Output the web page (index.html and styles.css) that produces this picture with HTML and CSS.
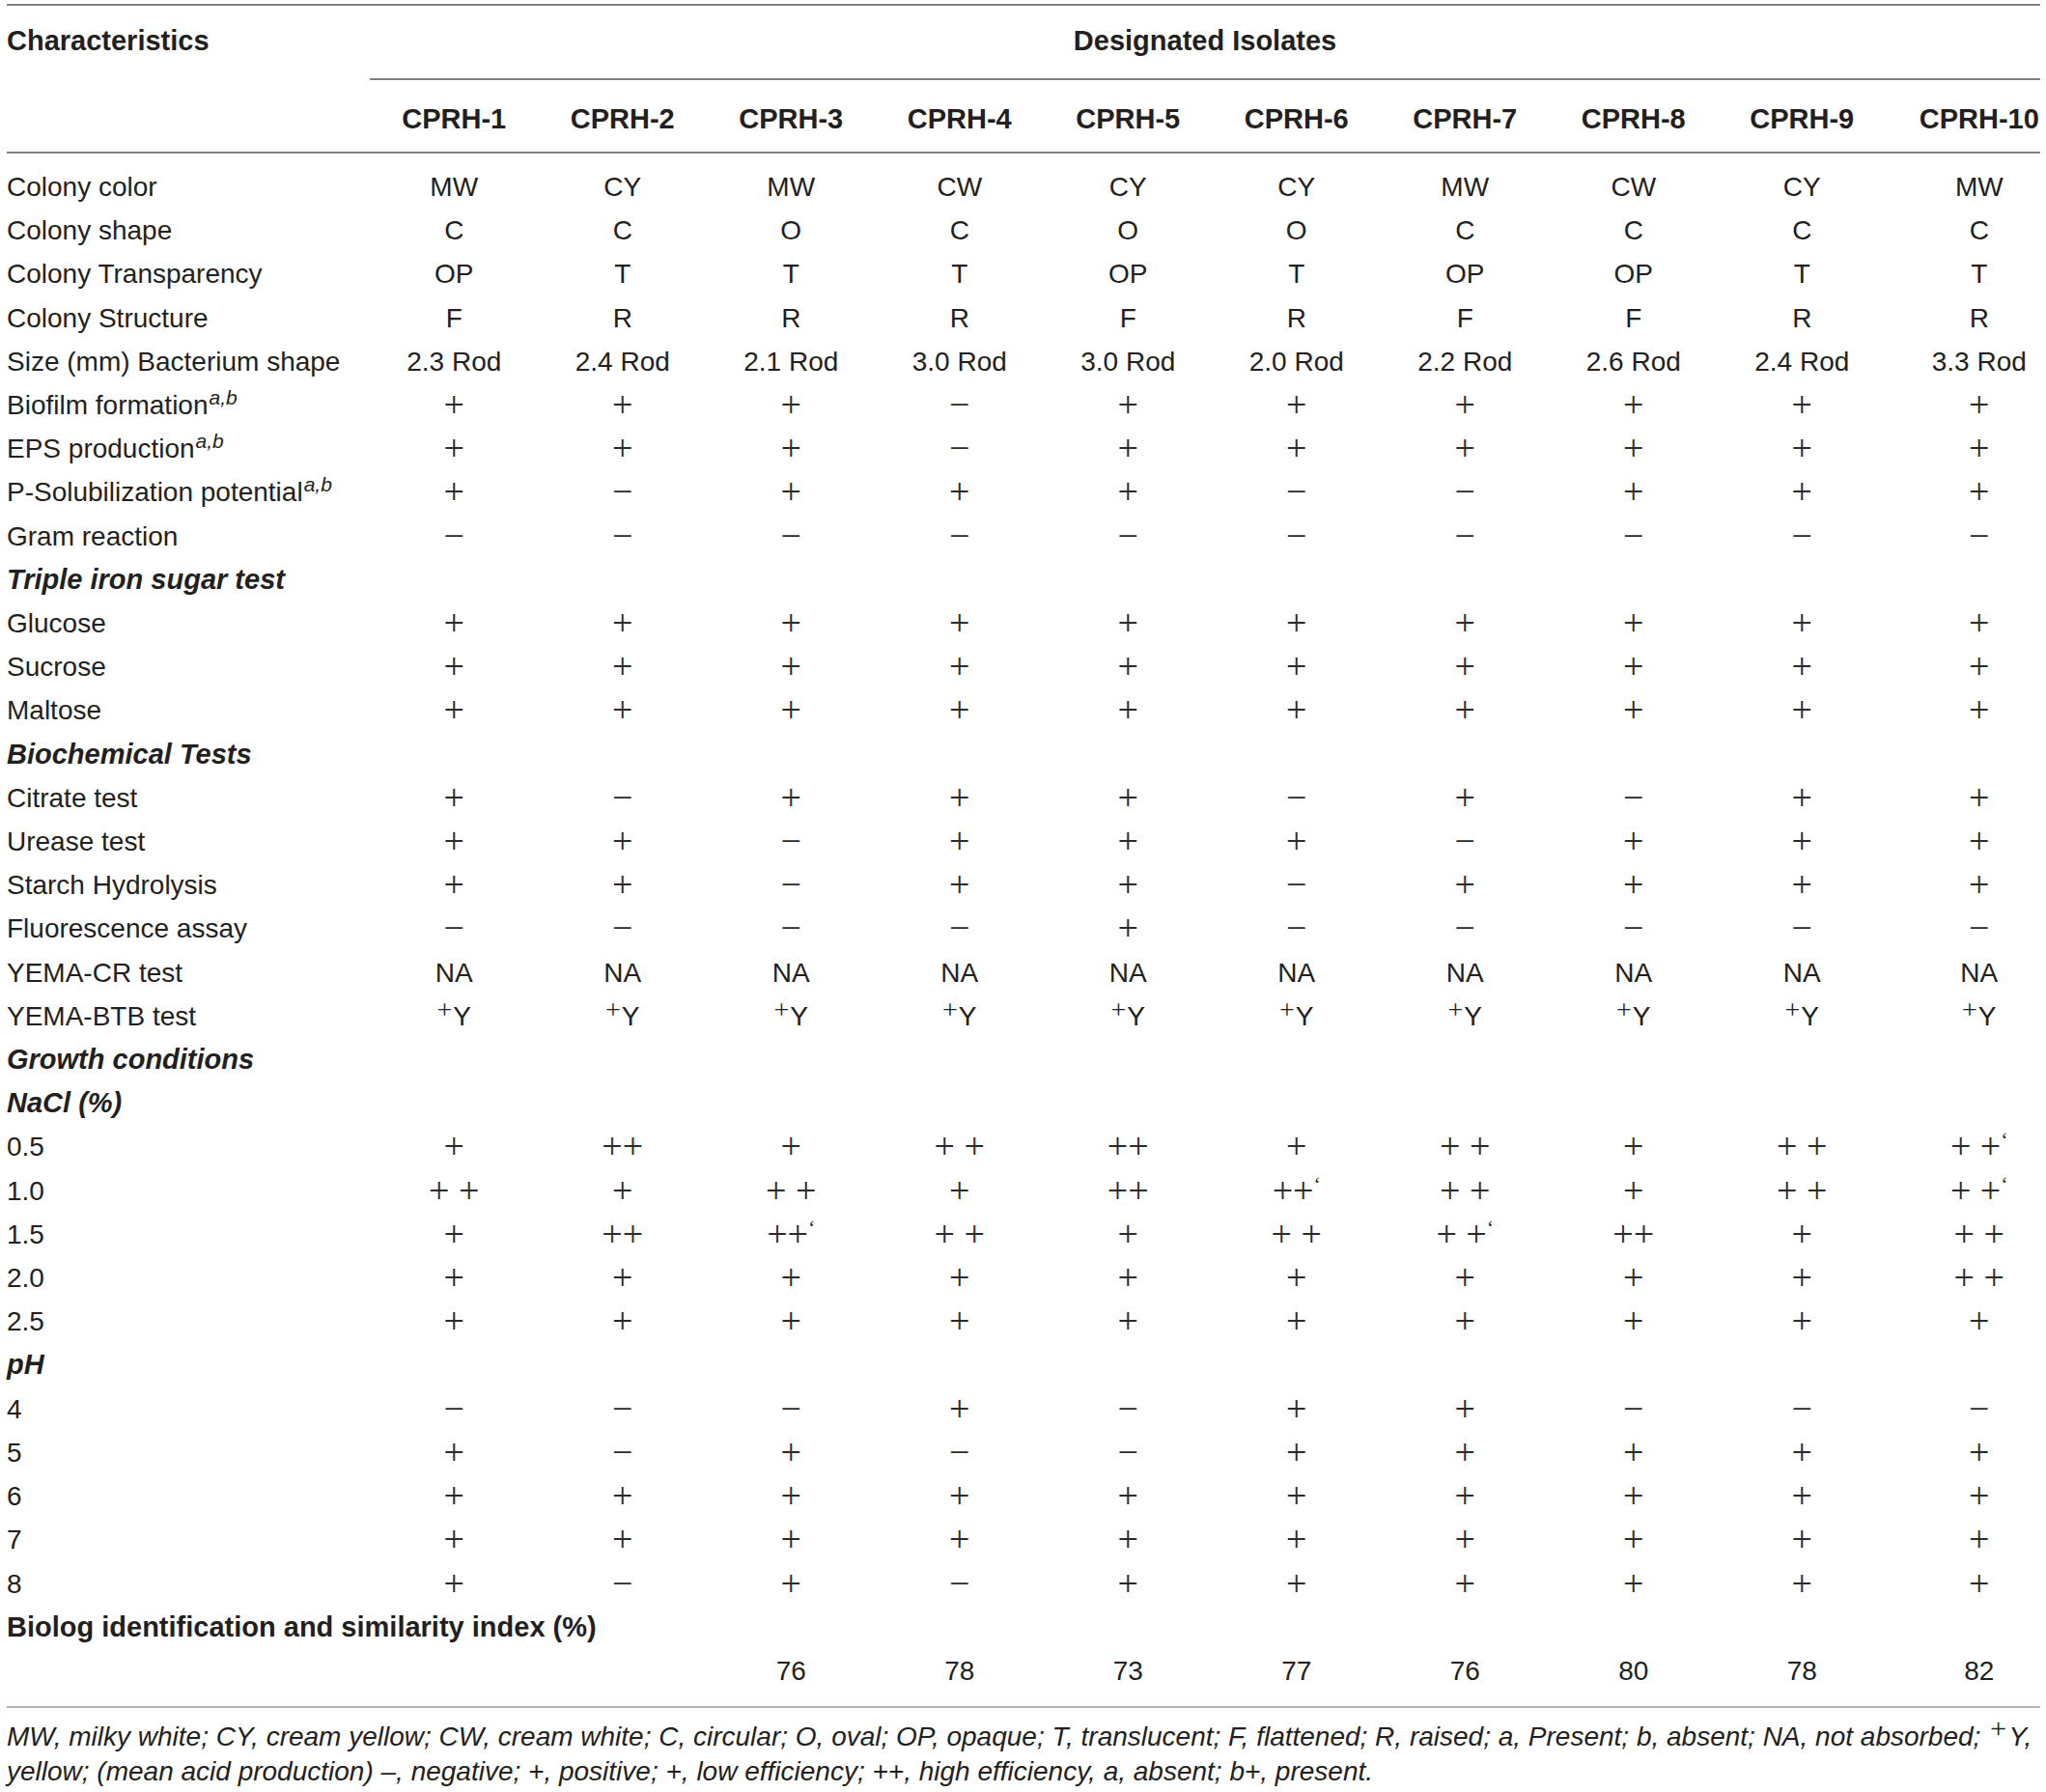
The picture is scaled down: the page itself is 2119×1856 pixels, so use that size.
FILE: index.html
```html
<!DOCTYPE html>
<html lang="en">
<head>
    <meta charset="UTF-8">
    <title>Characteristics of designated isolates</title>
    <link rel="stylesheet" href="styles.css">
</head>
<body>
<div class="page">
    <table class="traits">
        <colgroup>
            <col class="c-name">
            <col class="c-iso"><col class="c-iso"><col class="c-iso"><col class="c-iso"><col class="c-iso">
            <col class="c-iso"><col class="c-iso"><col class="c-iso"><col class="c-iso">
            <col class="c-last">
        </colgroup>
        <thead>
            <tr class="head-top">
                <th class="name">Characteristics</th>
                <th class="span" colspan="10">Designated Isolates</th>
            </tr>
            <tr class="head-iso">
                <th></th>
                <th>CPRH-1</th><th>CPRH-2</th><th>CPRH-3</th><th>CPRH-4</th><th>CPRH-5</th>
                <th>CPRH-6</th><th>CPRH-7</th><th>CPRH-8</th><th>CPRH-9</th><th>CPRH-10</th>
            </tr>
        </thead>
        <tbody>
            <tr class="first">
                <td>Colony color</td>
                <td>MW</td><td>CY</td><td>MW</td><td>CW</td><td>CY</td><td>CY</td><td>MW</td><td>CW</td><td>CY</td><td>MW</td>
            </tr>
            <tr>
                <td>Colony shape</td>
                <td>C</td><td>C</td><td>O</td><td>C</td><td>O</td><td>O</td><td>C</td><td>C</td><td>C</td><td>C</td>
            </tr>
            <tr>
                <td>Colony Transparency</td>
                <td>OP</td><td>T</td><td>T</td><td>T</td><td>OP</td><td>T</td><td>OP</td><td>OP</td><td>T</td><td>T</td>
            </tr>
            <tr>
                <td>Colony Structure</td>
                <td>F</td><td>R</td><td>R</td><td>R</td><td>F</td><td>R</td><td>F</td><td>F</td><td>R</td><td>R</td>
            </tr>
            <tr>
                <td>Size (mm) Bacterium shape</td>
                <td>2.3 Rod</td><td>2.4 Rod</td><td>2.1 Rod</td><td>3.0 Rod</td><td>3.0 Rod</td>
                <td>2.0 Rod</td><td>2.2 Rod</td><td>2.6 Rod</td><td>2.4 Rod</td><td>3.3 Rod</td>
            </tr>
            <tr class="signs">
                <td>Biofilm formation<sup class="ab">a,b</sup></td>
                <td>+</td><td>+</td><td>+</td><td>−</td><td>+</td><td>+</td><td>+</td><td>+</td><td>+</td><td>+</td>
            </tr>
            <tr class="signs">
                <td>EPS production<sup class="ab">a,b</sup></td>
                <td>+</td><td>+</td><td>+</td><td>−</td><td>+</td><td>+</td><td>+</td><td>+</td><td>+</td><td>+</td>
            </tr>
            <tr class="signs">
                <td>P-Solubilization potential<sup class="ab">a,b</sup></td>
                <td>+</td><td>−</td><td>+</td><td>+</td><td>+</td><td>−</td><td>−</td><td>+</td><td>+</td><td>+</td>
            </tr>
            <tr class="signs">
                <td>Gram reaction</td>
                <td>−</td><td>−</td><td>−</td><td>−</td><td>−</td><td>−</td><td>−</td><td>−</td><td>−</td><td>−</td>
            </tr>
            <tr class="section">
                <td colspan="11">Triple iron sugar test</td>
            </tr>
            <tr class="signs">
                <td>Glucose</td>
                <td>+</td><td>+</td><td>+</td><td>+</td><td>+</td><td>+</td><td>+</td><td>+</td><td>+</td><td>+</td>
            </tr>
            <tr class="signs">
                <td>Sucrose</td>
                <td>+</td><td>+</td><td>+</td><td>+</td><td>+</td><td>+</td><td>+</td><td>+</td><td>+</td><td>+</td>
            </tr>
            <tr class="signs">
                <td>Maltose</td>
                <td>+</td><td>+</td><td>+</td><td>+</td><td>+</td><td>+</td><td>+</td><td>+</td><td>+</td><td>+</td>
            </tr>
            <tr class="section">
                <td colspan="11">Biochemical Tests</td>
            </tr>
            <tr class="signs">
                <td>Citrate test</td>
                <td>+</td><td>−</td><td>+</td><td>+</td><td>+</td><td>−</td><td>+</td><td>−</td><td>+</td><td>+</td>
            </tr>
            <tr class="signs">
                <td>Urease test</td>
                <td>+</td><td>+</td><td>−</td><td>+</td><td>+</td><td>+</td><td>−</td><td>+</td><td>+</td><td>+</td>
            </tr>
            <tr class="signs">
                <td>Starch Hydrolysis</td>
                <td>+</td><td>+</td><td>−</td><td>+</td><td>+</td><td>−</td><td>+</td><td>+</td><td>+</td><td>+</td>
            </tr>
            <tr class="signs">
                <td>Fluorescence assay</td>
                <td>−</td><td>−</td><td>−</td><td>−</td><td>+</td><td>−</td><td>−</td><td>−</td><td>−</td><td>−</td>
            </tr>
            <tr>
                <td>YEMA-CR test</td>
                <td>NA</td><td>NA</td><td>NA</td><td>NA</td><td>NA</td><td>NA</td><td>NA</td><td>NA</td><td>NA</td><td>NA</td>
            </tr>
            <tr>
                <td>YEMA-BTB test</td>
                <td><sup class="py">+</sup>Y</td><td><sup class="py">+</sup>Y</td><td><sup class="py">+</sup>Y</td>
                <td><sup class="py">+</sup>Y</td><td><sup class="py">+</sup>Y</td><td><sup class="py">+</sup>Y</td>
                <td><sup class="py">+</sup>Y</td><td><sup class="py">+</sup>Y</td><td><sup class="py">+</sup>Y</td>
                <td><sup class="py">+</sup>Y</td>
            </tr>
            <tr class="section">
                <td colspan="11">Growth conditions</td>
            </tr>
            <tr class="section">
                <td colspan="11">NaCl (%)</td>
            </tr>
            <tr class="signs">
                <td>0.5</td>
                <td>+</td><td>++</td><td>+</td><td>+ +</td><td>++</td><td>+</td><td>+ +</td><td>+</td><td>+ +</td>
                <td>+ +<sup class="q">‘</sup></td>
            </tr>
            <tr class="signs">
                <td>1.0</td>
                <td>+ +</td><td>+</td><td>+ +</td><td>+</td><td>++</td><td>++<sup class="q">‘</sup></td><td>+ +</td><td>+</td><td>+ +</td>
                <td>+ +<sup class="q">‘</sup></td>
            </tr>
            <tr class="signs">
                <td>1.5</td>
                <td>+</td><td>++</td><td>++<sup class="q">‘</sup></td><td>+ +</td><td>+</td><td>+ +</td>
                <td>+ +<sup class="q">‘</sup></td><td>++</td><td>+</td><td>+ +</td>
            </tr>
            <tr class="signs">
                <td>2.0</td>
                <td>+</td><td>+</td><td>+</td><td>+</td><td>+</td><td>+</td><td>+</td><td>+</td><td>+</td><td>+ +</td>
            </tr>
            <tr class="signs">
                <td>2.5</td>
                <td>+</td><td>+</td><td>+</td><td>+</td><td>+</td><td>+</td><td>+</td><td>+</td><td>+</td><td>+</td>
            </tr>
            <tr class="section">
                <td colspan="11">pH</td>
            </tr>
            <tr class="signs">
                <td>4</td>
                <td>−</td><td>−</td><td>−</td><td>+</td><td>−</td><td>+</td><td>+</td><td>−</td><td>−</td><td>−</td>
            </tr>
            <tr class="signs">
                <td>5</td>
                <td>+</td><td>−</td><td>+</td><td>−</td><td>−</td><td>+</td><td>+</td><td>+</td><td>+</td><td>+</td>
            </tr>
            <tr class="signs">
                <td>6</td>
                <td>+</td><td>+</td><td>+</td><td>+</td><td>+</td><td>+</td><td>+</td><td>+</td><td>+</td><td>+</td>
            </tr>
            <tr class="signs">
                <td>7</td>
                <td>+</td><td>+</td><td>+</td><td>+</td><td>+</td><td>+</td><td>+</td><td>+</td><td>+</td><td>+</td>
            </tr>
            <tr class="signs">
                <td>8</td>
                <td>+</td><td>−</td><td>+</td><td>−</td><td>+</td><td>+</td><td>+</td><td>+</td><td>+</td><td>+</td>
            </tr>
            <tr class="section plain">
                <td colspan="11">Biolog identification and similarity index (%)</td>
            </tr>
            <tr class="last">
                <td></td>
                <td></td><td></td><td>76</td><td>78</td><td>73</td><td>77</td><td>76</td><td>80</td><td>78</td><td>82</td>
            </tr>
        </tbody>
    </table>

    <p class="note">MW, milky white; CY, cream yellow; CW, cream white; C, circular; O, oval; OP, opaque; T, translucent; F, flattened; R, raised; a, Present; b, absent; NA, not absorbed; <sup class="py">+</sup>Y,<br>yellow; (mean acid production) –, negative; +, positive; +, low efficiency; ++, high efficiency, a, absent; b+, present.</p>
</div>
</body>
</html>
```

FILE: styles.css
```css
:root {
    --ink: #231f20;
    --rule: #808080;
    --rule-light: #b4b4b4;
}

body {
    margin: 0;
    background: #fff;
    color: var(--ink);
    font-family: "Liberation Sans", Arial, sans-serif;
}

.page {
    padding: 4px 6px 0 7px;
}

.traits {
    width: 2106px;
    table-layout: fixed;
    border-collapse: separate;
    border-spacing: 0;
    border-top: 2px solid var(--rule);
    border-bottom: 2px solid var(--rule-light);
}

.c-name { width: 376px; }
.c-iso { width: 174.5px; }
.c-last { width: 159.5px; }

.traits th {
    padding: 0;
    font-size: 29px;
    font-weight: bold;
    line-height: 36px;
    vertical-align: top;
    text-align: center;
    white-space: nowrap;
}

.head-top th {
    padding: 18px 0 21px;
}

.head-top .name {
    text-align: left;
}

.head-top .span {
    border-bottom: 2px solid var(--rule);
}

.head-iso th {
    padding: 22px 0 16px;
    border-bottom: 2px solid var(--rule);
}

.traits th:nth-child(11),
.traits td:nth-child(11) {
    padding-left: 33px;
}

.traits td {
    padding: 0;
    height: 45.2px;
    font-size: 28px;
    line-height: 45.2px;
    text-align: center;
    vertical-align: middle;
    white-space: nowrap;
}

.traits td:first-child {
    text-align: left;
}

.first td {
    padding-top: 12px;
}

.last td {
    padding-bottom: 14px;
}

/* plus / minus marks: thin serif glyphs, closer to the printed table */
.signs td + td {
    font-family: "Liberation Serif", "Times New Roman", serif;
    font-size: 38px;
    color: #2b2b2b;
}

.section td {
    font-size: 29px;
    font-weight: bold;
    font-style: italic;
}

.section.plain td {
    font-style: normal;
}

sup {
    line-height: 0;
}

.ab {
    font-size: 21px;
    font-style: italic;
    vertical-align: 10px;
    margin-left: 1px;
}

.py {
    font-family: "Liberation Serif", "Times New Roman", serif;
    font-size: 28px;
    vertical-align: 7px;
    margin-right: 1px;
}

.q {
    font-size: 22px;
    vertical-align: 12px;
}

.note {
    margin: 12px 0 0;
    font-size: 28px;
    font-style: italic;
    line-height: 36px;
    white-space: nowrap;
}

.note .py {
    font-size: 30px;
    vertical-align: 8px;
}
```
